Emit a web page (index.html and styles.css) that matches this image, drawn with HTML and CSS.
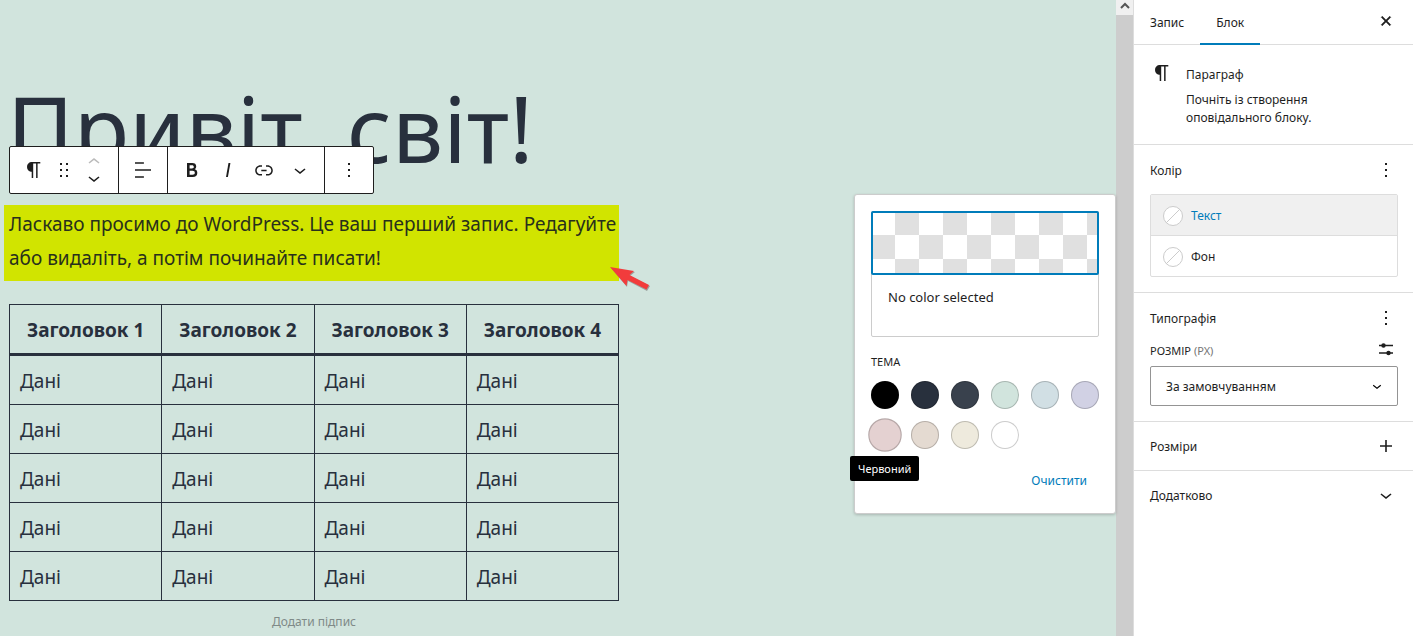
FILE: index.html
```
<!DOCTYPE html>
<html lang="uk">
<head>
  <meta charset="UTF-8">
  <meta name="viewport" content="width=device-width, initial-scale=1.0">
  <title>Редагувати запис</title>
  <link rel="stylesheet" href="styles.css">
</head>
<body>
  <div class="editor">
    <!-- Canvas -->
    <main class="canvas">
      <article class="post">
        <h1>Привіт, світ!</h1>

        <div class="toolbar" role="toolbar" aria-label="Інструменти блоку">
          <div class="toolbar-group">
            <button type="button" class="wide" aria-label="Параграф">
              <svg class="icon" viewBox="0 0 24 24"><path d="M18.3 4H9.9v-.1l-.9.2c-2.3.4-4 2.4-4 4.8s1.7 4.4 4 4.8l.7.1V20h1.5V5.5h2.9V20h1.5V5.5h2.7V4z"/></svg>
            </button>
            <button type="button" class="drag" aria-label="Перетягнути">
              <svg class="icon" viewBox="0 0 24 24"><path d="M8 5h2v2H8zM14 5h2v2h-2zM8 11h2v2H8zM14 11h2v2h-2zM8 17h2v2H8zM14 17h2v2h-2z"/></svg>
            </button>
            <div class="mover">
              <button type="button" aria-label="Вгору" disabled>
                <svg class="icon" viewBox="0 0 24 24"><path d="M6.5 12.4L12 8l5.5 4.4-.9 1.2L12 10l-4.5 3.6-1-1.2z"/></svg>
              </button>
              <button type="button" aria-label="Вниз">
                <svg class="icon" viewBox="0 0 24 24"><path d="M17.5 11.6L12 16l-5.5-4.4.9-1.2L12 14l4.5-3.6 1 1.2z"/></svg>
              </button>
            </div>
          </div>
          <div class="toolbar-group">
            <button type="button" class="wide" aria-label="Вирівняти текст">
              <svg class="icon" viewBox="0 0 24 24"><path d="M4 19.8h8.9v-1.5H4v1.5zm8.9-15.6H4v1.5h8.9V4.2zm-8.9 7v1.5h16v-1.5H4z"/></svg>
            </button>
          </div>
          <div class="toolbar-group padded">
            <button type="button" aria-label="Жирний">
              <svg class="icon" viewBox="0 0 24 24"><path d="M14.7 11.3c1-.6 1.5-1.6 1.5-3 0-2.3-1.3-3.4-4-3.4H7v14h5.8c1.4 0 2.5-.3 3.3-1 .8-.7 1.2-1.7 1.2-2.9.1-1.9-.8-3.1-2.6-3.7zm-5.1-4h2.3c.6 0 1.1.1 1.4.4.3.3.5.7.5 1.2s-.2 1-.5 1.2c-.3.3-.8.4-1.4.4H9.6V7.3zm4.6 9c-.4.3-1 .4-1.7.4H9.6v-3.9h2.9c.7 0 1.3.2 1.7.5.4.3.6.8.6 1.5s-.2 1.2-.6 1.5z"/></svg>
            </button>
            <button type="button" aria-label="Курсив">
              <svg class="icon" viewBox="0 0 24 24"><path d="M12.5 5L10 19h1.9l2.5-14z"/></svg>
            </button>
            <button type="button" aria-label="Посилання">
              <svg class="icon" viewBox="0 0 24 24"><path d="M15.6 7.2H14v1.5h1.6c2 0 3.7 1.7 3.7 3.7s-1.7 3.7-3.7 3.7H14v1.5h1.6c2.8 0 5.2-2.3 5.2-5.2 0-2.9-2.3-5.2-5.2-5.2zM4.7 12.4c0-2 1.7-3.7 3.7-3.7H10V7.2H8.4c-2.9 0-5.2 2.3-5.2 5.2 0 2.9 2.3 5.2 5.2 5.2H10v-1.5H8.4c-2 0-3.7-1.7-3.7-3.7zm4.6.9h5.3v-1.5H9.3v1.5z"/></svg>
            </button>
            <button type="button" aria-label="Більше">
              <svg class="icon" viewBox="0 0 24 24"><path d="M17.5 11.6L12 16l-5.5-4.4.9-1.2L12 14l4.5-3.6 1 1.2z"/></svg>
            </button>
          </div>
          <div class="toolbar-group">
            <button type="button" class="wide" aria-label="Опції">
              <svg class="icon" viewBox="0 0 24 24"><path d="M13 19h-2v-2h2v2zm0-6h-2v-2h2v2zm0-6h-2V5h2v2z"/></svg>
            </button>
          </div>
        </div>

        <div class="highlight">
          <p>Ласкаво просимо до WordPress. Це ваш перший запис. Редагуйте або видаліть, а потім починайте писати!</p>
          <svg class="pointer" viewBox="0 0 42 26"><path d="M2 2L26 6L21 10L41 20L38 25L19 15L18 21Z" fill="#777" opacity=".6"/><path d="M1 1L25 5L20.500 9L40 19L37.500 23.500L18.500 14L17.500 20Z" fill="#f23c3c"/></svg>
        </div>

        <table>
          <thead>
            <tr><th>Заголовок 1</th><th>Заголовок 2</th><th>Заголовок 3</th><th>Заголовок 4</th></tr>
          </thead>
          <tbody>
            <tr><td>Дані</td><td>Дані</td><td>Дані</td><td>Дані</td></tr>
            <tr><td>Дані</td><td>Дані</td><td>Дані</td><td>Дані</td></tr>
            <tr><td>Дані</td><td>Дані</td><td>Дані</td><td>Дані</td></tr>
            <tr><td>Дані</td><td>Дані</td><td>Дані</td><td>Дані</td></tr>
            <tr><td>Дані</td><td>Дані</td><td>Дані</td><td>Дані</td></tr>
          </tbody>
        </table>
        <p class="caption">Додати підпис</p>
      </article>

      <!-- Colour popover -->
      <section class="popover" aria-label="Колір тексту">
        <div class="current-color">
          <button type="button" class="preview" aria-label="Обрати колір"></button>
          <p>No color selected</p>
        </div>
        <h2>ТЕМА</h2>
        <div class="swatches">
          <button type="button" class="swatch black" aria-label="Чорний"></button>
          <button type="button" class="swatch dark-gray" aria-label="Темно-сірий"></button>
          <button type="button" class="swatch gray" aria-label="Сірий"></button>
          <button type="button" class="swatch green" aria-label="Зелений"></button>
          <button type="button" class="swatch blue" aria-label="Синій"></button>
          <button type="button" class="swatch purple" aria-label="Пурпурний"></button>
          <button type="button" class="swatch red" aria-label="Червоний"></button>
          <button type="button" class="swatch orange" aria-label="Помаранчевий"></button>
          <button type="button" class="swatch yellow" aria-label="Жовтий"></button>
          <button type="button" class="swatch white" aria-label="Білий"></button>
        </div>
        <button type="button" class="clear">Очистити</button>
        <span class="tooltip" role="tooltip">Червоний</span>
      </section>
    </main>

    <div class="scrollbar" aria-hidden="true">
      <div class="scroll-up">
        <svg viewBox="0 0 10 8"><path d="M1 6L5 2l4 4" fill="none" stroke="#555" stroke-width="2"/></svg>
      </div>
    </div>

    <!-- Settings sidebar -->
    <aside class="sidebar">
      <header class="tabs">
        <button type="button" class="tab">Запис</button>
        <button type="button" class="tab active">Блок</button>
        <button type="button" class="icon-button close" aria-label="Закрити">
          <svg class="icon" viewBox="0 0 24 24"><path d="M12 13.06l3.712 3.713 1.061-1.06L13.061 12l3.712-3.712-1.06-1.06L12 10.938 8.288 7.227l-1.061 1.06L10.939 12l-3.712 3.712 1.06 1.061L12 13.061z" stroke="#1e1e1e" stroke-width=".5"/></svg>
        </button>
      </header>

      <section class="block-card">
        <svg class="icon" viewBox="0 0 24 24"><path d="M18.3 4H9.9v-.1l-.9.2c-2.3.4-4 2.4-4 4.8s1.7 4.4 4 4.8l.7.1V20h1.5V5.5h2.9V20h1.5V5.5h2.7V4z"/></svg>
        <div>
          <h2>Параграф</h2>
          <p>Почніть із створення оповідального блоку.</p>
        </div>
      </section>

      <section class="panel color-panel">
        <div class="panel-title">
          <h2>Колір</h2>
          <button type="button" class="icon-button" aria-label="Опції кольору">
            <svg class="icon" viewBox="0 0 24 24"><path d="M13 19h-2v-2h2v2zm0-6h-2v-2h2v2zm0-6h-2V5h2v2z"/></svg>
          </button>
        </div>
        <div class="color-list">
          <button type="button" class="color-item selected"><span class="no-color"></span>Текст</button>
          <button type="button" class="color-item"><span class="no-color"></span>Фон</button>
        </div>
      </section>

      <section class="panel type-panel">
        <div class="panel-title">
          <h2>Типографія</h2>
          <button type="button" class="icon-button" aria-label="Опції типографії">
            <svg class="icon" viewBox="0 0 24 24"><path d="M13 19h-2v-2h2v2zm0-6h-2v-2h2v2zm0-6h-2V5h2v2z"/></svg>
          </button>
        </div>
        <div class="size-label">
          <label for="font-size">РОЗМІР <span>(PX)</span></label>
          <button type="button" class="icon-button" aria-label="Власний розмір">
            <svg class="icon" viewBox="0 0 24 24"><path d="M5 7.500h14M5 15h14" stroke="#1e1e1e" stroke-width="1.500"/><circle cx="9.500" cy="7.500" r="2.200"/><circle cx="14.500" cy="15" r="2.200"/></svg>
          </button>
        </div>
        <div class="select-wrap">
          <select id="font-size">
            <option>За замовчуванням</option>
            <option>Малий</option>
            <option>Великий</option>
          </select>
          <svg class="select-arrow" viewBox="0 0 24 24"><path d="M17.5 11.6L12 16l-5.5-4.4.9-1.2L12 14l4.5-3.6 1 1.2z"/></svg>
        </div>
      </section>

      <section class="panel closed">
        <div class="panel-title">
          <h2>Розміри</h2>
          <button type="button" class="icon-button" aria-label="Додати розміри">
            <svg class="icon" viewBox="0 0 24 24"><path d="M18 11.2h-5.2V6h-1.6v5.2H6v1.6h5.2V18h1.6v-5.2H18z"/></svg>
          </button>
        </div>
      </section>

      <section class="panel closed last">
        <div class="panel-title">
          <h2>Додатково</h2>
          <button type="button" class="icon-button" aria-label="Розгорнути">
            <svg class="icon" viewBox="0 0 24 24"><path d="M17.5 11.6L12 16l-5.5-4.4.9-1.2L12 14l4.5-3.6 1 1.2z"/></svg>
          </button>
        </div>
      </section>
    </aside>
  </div>
</body>
</html>
```
FILE: styles.css
```
* {
  box-sizing: border-box;
}
body {
  margin: 0;
  font-family: "Noto Sans", "Open Sans", sans-serif;
  font-size: 12px;
  line-height: 18px;
  color: #1e1e1e;
}
h1, h2, p {
  margin: 0;
  font-weight: normal;
}
h2 {
  font-size: 12px;
}
button {
  display: flex;
  align-items: center;
  justify-content: center;
  padding: 0;
  border: 0;
  background: none;
  font: inherit;
  color: inherit;
  cursor: pointer;
}
.icon {
  width: 24px;
  height: 24px;
  flex: none;
  fill: currentColor;
}
.editor {
  display: flex;
  height: 100vh;
  overflow: hidden;
}

/* Canvas */
.canvas {
  position: relative;
  flex: 1;
  background: #d1e4dd;
  color: #28303d;
}
.post {
  position: relative;
  max-width: 619px;
  padding-top: 66px;
}
h1 {
  padding: 0 0 2px 7px;
  font-size: 91px;
  line-height: 125px;
  white-space: nowrap;
}
.toolbar {
  position: absolute;
  top: 146px;
  left: 9px;
  display: flex;
  height: 48px;
  background: #fff;
  border: 1px solid #1e1e1e;
  border-radius: 2px;
  color: #1e1e1e;
}
.toolbar-group {
  display: flex;
}
.toolbar-group + .toolbar-group {
  border-left: 1px solid #1e1e1e;
}
.toolbar-group.padded {
  padding: 0 6px;
}
.toolbar button {
  width: 36px;
}
.toolbar .wide {
  width: 48px;
}
.toolbar .drag {
  width: 12px;
}
.mover {
  display: flex;
  flex-direction: column;
  justify-content: center;
  width: 48px;
}
.toolbar .mover button {
  width: 48px;
  height: 16px;
}
.mover button:disabled {
  color: #bbb;
}
.highlight {
  position: relative;
  margin: 12px 0 23px 4px;
  padding: 2px 0 6px 5px;
  background: #d1e400;
  color: #28301c;
}
.highlight p {
  font-size: 19px;
  line-height: 34px;
}
.pointer {
  position: absolute;
  right: -32px;
  bottom: -11px;
  width: 42px;
  height: 26px;
}
table {
  width: 610px;
  margin-left: 9px;
  border-collapse: collapse;
  table-layout: fixed;
  font-size: 19px;
  line-height: 28px;
}
th, td {
  padding: 11px 10px 9px;
  border: 1px solid #28303d;
  text-align: left;
}
th {
  text-align: center;
}
thead {
  border-bottom: 3px solid #28303d;
}
.caption {
  margin-top: 12px;
  padding-left: 9px;
  font-size: 12px;
  text-align: center;
  color: #7f8a88;
}

/* Popover */
.popover {
  position: absolute;
  top: 194px;
  right: 0;
  width: 262px;
  height: 320px;
  padding: 16px;
  background: #fff;
  border: 1px solid #ccc;
  border-radius: 3px;
  box-shadow: 0 1px 3px rgba(0, 0, 0, 0.2);
  color: #1e1e1e;
}
.current-color {
  height: 126px;
  border: 1px solid #ccc;
  border-radius: 2px;
}
.preview {
  width: calc(100% + 2px);
  height: 64px;
  margin: -1px;
  border: 2px solid #007cba;
  border-radius: 2px;
  background: repeating-conic-gradient(#e0e0e0 0 25%, #fff 0 50%) 0 0 / 48px 48px border-box;
}
.current-color p {
  padding: 14px 16px;
  font-size: 13px;
}
.popover h2 {
  margin: 16px 0 10px;
  font-size: 11px;
}
.swatches {
  display: grid;
  grid-template-columns: repeat(6, 28px);
  gap: 12px;
}
.swatch {
  width: 28px;
  height: 28px;
  border: 1px solid rgba(0, 0, 0, 0.2);
  border-radius: 50%;
}
.black {
  background: #000;
}
.dark-gray {
  background: #28303d;
}
.gray {
  background: #39414d;
}
.green {
  background: #d1e4dd;
}
.blue {
  background: #d1dfe4;
}
.purple {
  background: #d1d1e4;
}
.red {
  background: #e4d1d1;
  transform: scale(1.2);
}
.orange {
  background: #e4dad1;
}
.yellow {
  background: #eeeadd;
}
.white {
  background: #fff;
}
.clear {
  margin: 23px 12px 0 auto;
  color: #007cba;
}
.tooltip {
  position: absolute;
  top: 261px;
  left: -5px;
  padding: 4px 8px;
  border-radius: 2px;
  background: #000;
  font-size: 11px;
  line-height: 17px;
  color: #fff;
}

/* Scrollbar */
.scrollbar {
  width: 17px;
  background: #cdcdcd;
}
.scroll-up {
  display: flex;
  align-items: flex-start;
  justify-content: center;
  height: 15px;
  padding-top: 2px;
  background: #f0f0f0;
}
.scroll-up svg {
  width: 10px;
  height: 8px;
}

/* Sidebar */
.sidebar {
  flex: 0 0 280px;
  background: #fff;
  border-left: 1px solid #ddd;
}
.tabs {
  display: flex;
  height: 45px;
  padding-right: 15px;
  border-bottom: 1px solid #ddd;
}
.tab {
  height: 45px;
  padding: 0 16px;
}
.tab.active {
  border-bottom: 2px solid #007cba;
  padding-top: 2px;
}
.icon-button {
  width: 24px;
  height: 24px;
}
.close {
  margin: 9px 0 0 auto;
}
.block-card {
  display: flex;
  gap: 12px;
  height: 100px;
  padding: 16px;
  border-bottom: 1px solid #ddd;
}
.block-card h2 {
  margin: 5px 0 7px;
  line-height: 18px;
}
.block-card p {
  max-width: 160px;
}
.panel {
  padding: 13px 15px 15px 16px;
  border-bottom: 1px solid #ddd;
}
.panel-title, .size-label {
  display: flex;
  align-items: center;
  justify-content: space-between;
}
.panel-title h2 {
  padding-top: 2px;
}
.color-list {
  margin-top: 12px;
  border: 1px solid #ddd;
  border-radius: 2px;
}
.color-item {
  justify-content: flex-start;
  gap: 8px;
  width: 100%;
  height: 40px;
  padding: 2px 12px 0;
}
.color-item.selected {
  height: 41px;
  border-bottom: 1px solid #ddd;
  background: #f0f0f0;
  color: #007cba;
}
.no-color {
  width: 20px;
  height: 20px;
  border: 1px solid #ccc;
  border-radius: 50%;
  background: linear-gradient(-45deg, #fff 48%, #ccc 48%, #ccc 52%, #fff 52%);
}
.size-label {
  margin: 8px 0 4px;
  font-size: 11px;
}
.size-label label {
  padding-top: 2px;
}
.size-label span {
  color: #757575;
}
.select-wrap {
  position: relative;
}
select {
  display: block;
  width: 100%;
  height: 40px;
  padding: 2px 32px 0 15px;
  border: 1px solid #949494;
  border-radius: 2px;
  background: #fff;
  font: inherit;
  color: inherit;
  appearance: none;
}
.select-arrow {
  position: absolute;
  top: 11px;
  right: 12px;
  width: 18px;
  height: 18px;
  pointer-events: none;
}
.closed {
  padding-top: 12px;
  padding-bottom: 12px;
}
.last {
  border-bottom: 0;
}
```
